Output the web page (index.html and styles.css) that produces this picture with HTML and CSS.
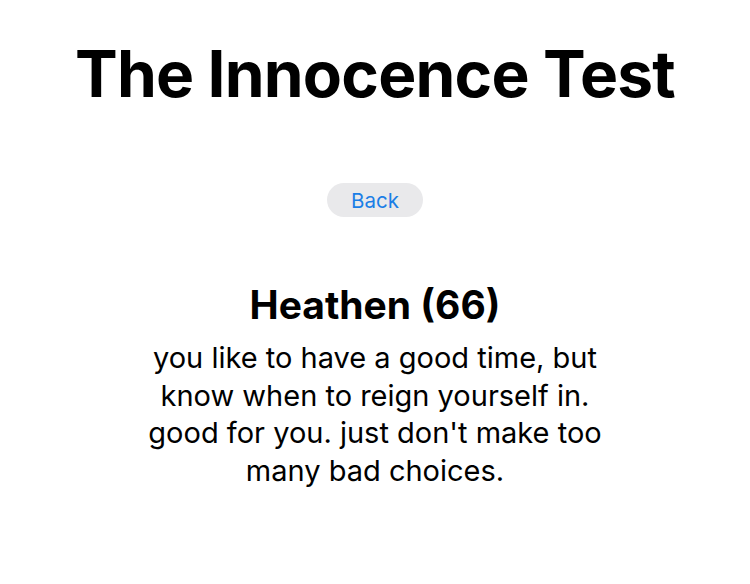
FILE: index.html
```html
<!DOCTYPE html>
<html lang="en">
<head>
<meta charset="utf-8">
<title>The Innocence Test</title>
<link rel="stylesheet" href="styles.css">
</head>
<body>
<main class="page">
  <h1 class="title">The Innocence Test</h1>
  <button class="back">Back</button>
  <section class="result">
    <h2 class="result-name">Heathen (66)</h2>
    <p class="result-text">you like to have a good time, but know when to reign yourself in. good for you. just don't make too many bad choices.</p>
  </section>
</main>
</body>
</html>
```

FILE: styles.css
```css
html, body {
  margin: 0;
  padding: 0;
  background: #ffffff;
}
body {
  font-family: Inter, "Noto Sans", sans-serif;
  color: #000;
}
.page {
  display: flex;
  flex-direction: column;
  align-items: center;
  padding-top: 38px;
}
.title {
  margin: 0;
  font-size: 64px;
  font-weight: 700;
  line-height: 72px;
  letter-spacing: -0.8px;
}
.back {
  margin-top: 73px;
  width: 96px;
  height: 34px;
  border: none;
  border-radius: 17px;
  background: #e9e9eb;
  color: #1a7ee6;
  font-family: inherit;
  font-size: 20.5px;
  padding: 0;
}
.result {
  margin-top: 64px;
  display: flex;
  flex-direction: column;
  align-items: center;
  width: 466px;
  text-align: center;
}
.result-name {
  margin: 0;
  font-size: 39px;
  font-weight: 700;
  line-height: 48px;
}
.result-text {
  margin: 10px 0 0;
  font-size: 29px;
  line-height: 37.5px;
  font-weight: 400;
}
```
